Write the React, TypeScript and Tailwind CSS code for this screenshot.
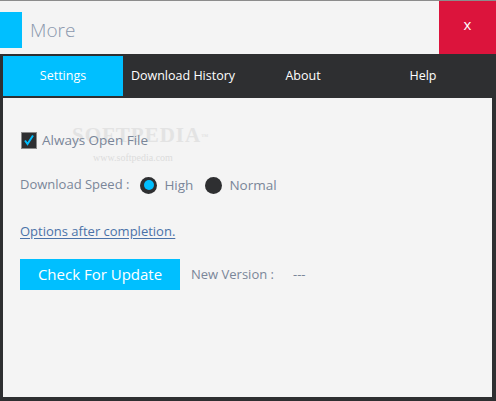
const font = { fontFamily: '"Open Sans", "Noto Sans", sans-serif' };

const tabs = ["Settings", "Download History", "About", "Help"];

export default function App() {
  return (
    <div className="w-[496px] h-[401px] flex flex-col bg-[#2e2f31] overflow-hidden" style={font}>
      {/* title bar */}
      <div className="h-[54px] flex border-t border-[#8c8c8c] bg-[#f4f4f4]">
        <div className="mt-[11px] w-[22px] h-[36px] bg-[#00bfff]" />
        <div className="ml-[8px] mt-[15px] text-[19px] leading-[28px] font-light text-[#8b98ad]">More</div>
        <div className="ml-auto w-[57px] h-[53px] bg-[#dc143c] flex items-center justify-center text-white text-[15px] pb-[6px]">
          x
        </div>
      </div>

      {/* tabs */}
      <div className="h-[44px] flex pl-[3px] pt-[2px] pb-[2px]">
        {tabs.map((t, i) => (
          <div
            key={t}
            className={`w-[120px] flex items-center justify-center text-[12.5px] text-white ${i === 0 ? "bg-[#00bfff]" : ""}`}
          >
            {t}
          </div>
        ))}
      </div>

      {/* content */}
      <div className="relative ml-[3px] mr-[4px] h-[299px] bg-[#f4f4f4] pl-[17px] pt-[33px] text-[13px] text-[#7a8699]">
        <div
          className="absolute left-[69px] top-[26px] text-[21px] leading-[22px] font-bold tracking-[1px] text-[#e3e3e3] pointer-events-none"
          style={{ fontFamily: '"Liberation Serif", serif' }}
        >
          SOFTPEDIA<sup className="text-[7px]">™</sup>
        </div>
        <div
          className="absolute left-[90px] top-[54px] text-[10px] leading-[12px] text-[#dcdcdc] pointer-events-none"
          style={{ fontFamily: '"Liberation Serif", serif' }}
        >
          www.softpedia.com
        </div>

        <div className="relative flex items-center h-[18px]">
          <div className="ml-[1px] w-[16px] h-[17px] bg-[#2e2f31] border border-[#8a8a8a] flex items-center justify-center">
            <svg width="12" height="12" viewBox="0 0 12 12">
              <path d="M2 6.5 L4.5 10 L10 1.5" fill="none" stroke="#00bfff" strokeWidth="2" />
            </svg>
          </div>
          <span className="ml-[5px] text-[13.5px]">Always Open File</span>
        </div>

        <div className="relative flex items-center h-[20px] mt-[26px]">
          <span>Download Speed :</span>
          <span className="ml-[11px] w-[17px] h-[17px] rounded-full bg-[#2e2f31] flex items-center justify-center">
            <span className="w-[10px] h-[10px] rounded-full bg-[#00bfff]" />
          </span>
          <span className="ml-[7px] text-[13.5px]">High</span>
          <span className="ml-[12px] w-[17px] h-[17px] rounded-full bg-[#2e2f31]" />
          <span className="ml-[7px] text-[13.5px]">Normal</span>
        </div>

        <div className="mt-[27px] h-[20px] flex items-center">
          <span className="underline text-[#4a72a8] underline-offset-2">Options after completion.</span>
        </div>

        <div className="mt-[17px] flex items-center">
          <div className="w-[160px] h-[31px] bg-[#00bfff] flex items-center justify-center text-white text-[15px]">
            Check For Update
          </div>
          <span className="ml-[11px]">New Version :</span>
          <span className="ml-[19px]">---</span>
        </div>
      </div>
    </div>
  );
}
